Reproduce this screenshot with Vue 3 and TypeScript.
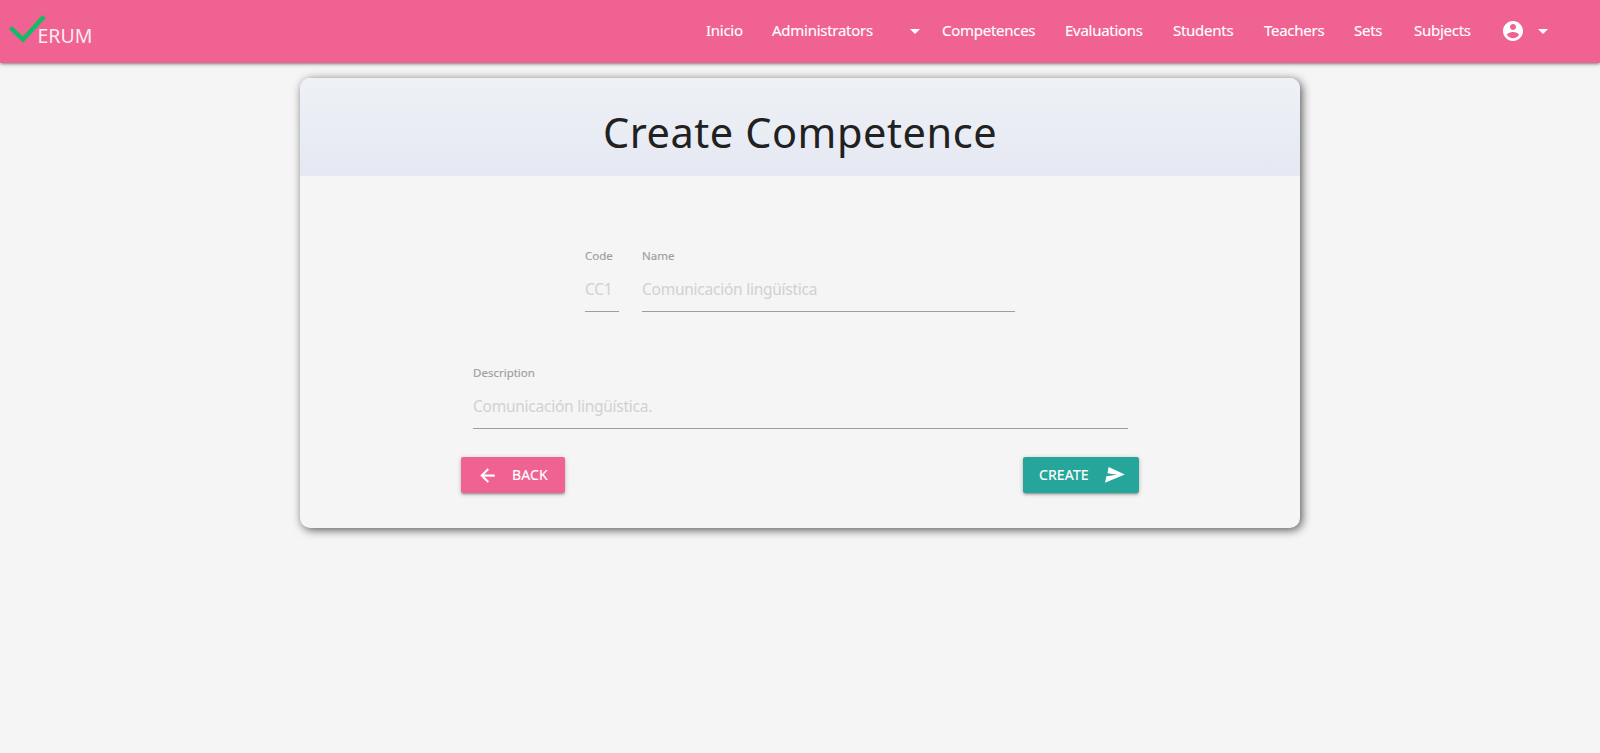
<script setup lang="ts">
interface NavItem {
  label: string
  width: number
  caret?: boolean
}

const navItems: NavItem[] = [
  { label: 'Inicio', width: 66 },
  { label: 'Administrators', width: 170, caret: true },
  { label: 'Competences', width: 123 },
  { label: 'Evaluations', width: 108 },
  { label: 'Students', width: 91 },
  { label: 'Teachers', width: 90 },
  { label: 'Sets', width: 60 },
  { label: 'Subjects', width: 88 },
]
</script>

<template>
  <div class="page">
    <nav class="navbar">
      <a class="brand">
        <svg class="check" width="40" height="34" viewBox="0 0 40 34"><path d="M2.500 14.500 15 26.500 36 3.500" /></svg>
        <span>ERUM</span>
      </a>
      <ul class="menu">
        <li v-for="item in navItems" :key="item.label" :style="{ width: item.width + 'px' }">
          <span>{{ item.label }}</span>
          <svg v-if="item.caret" class="caret" viewBox="0 0 24 24"><path d="M7 10l5 5 5-5z" /></svg>
        </li>
        <li class="account">
          <svg viewBox="0 0 24 24"><path d="M12 2C6.480 2 2 6.480 2 12s4.480 10 10 10 10-4.480 10-10S17.520 2 12 2zm0 3c1.660 0 3 1.340 3 3s-1.340 3-3 3-3-1.340-3-3 1.340-3 3-3zm0 14.200c-2.500 0-4.710-1.280-6-3.220.030-1.990 4-3.080 6-3.080 1.990 0 5.970 1.090 6 3.080-1.290 1.940-3.500 3.220-6 3.220z" /></svg>
          <svg viewBox="0 0 24 24"><path d="M7 10l5 5 5-5z" /></svg>
        </li>
      </ul>
    </nav>

    <main class="card">
      <header class="card-head"><h1>Create Competence</h1></header>
      <form class="form">
        <div class="row">
          <label class="field code"><span>Code</span><input type="text" placeholder="CC1" /></label>
          <label class="field name"><span>Name</span><input type="text" placeholder="Comunicación lingüística" /></label>
        </div>
        <label class="field description"><span>Description</span><input type="text" placeholder="Comunicación lingüística." /></label>
        <div class="actions">
          <button type="button" class="btn back">
            <svg viewBox="0 0 24 24"><path d="M20 11H7.830l5.590-5.590L12 4l-8 8 8 8 1.410-1.410L7.830 13H20v-2z" /></svg>
            <span>BACK</span>
          </button>
          <button type="button" class="btn create">
            <span>CREATE</span>
            <svg viewBox="0 0 20 16"><path d="M3.600 0 19.800 7.600 0 15.700 1.400 9.300 12 7.800 2.500 6.300z" /></svg>
          </button>
        </div>
      </form>
    </main>
  </div>
</template>

<style>
body {
  background: #f5f5f5;
}
</style>

<style scoped>
.page {
  height: 753px;
  overflow: hidden;
  background: #f5f5f5;
  font-family: "Noto Sans", "Open Sans", sans-serif;
}
.page *,
.page {
  box-sizing: border-box;
}
.navbar {
  display: flex;
  justify-content: space-between;
  height: 63px;
  background: #f06292;
  color: #fff;
  box-shadow: 0 2px 2px 0 rgba(0, 0, 0, 0.14), 0 3px 1px -2px rgba(0, 0, 0, 0.12), 0 1px 5px 0 rgba(0, 0, 0, 0.2);
}
.brand {
  display: flex;
  padding: 13px 0 0 8px;
}
.brand span {
  margin: 8px 0 0 -10.5px;
  font-size: 19.5px;
  line-height: 30px;
  letter-spacing: 0;
  opacity: 0.88;
}
.check path {
  fill: none;
  stroke: #12bb66;
  stroke-width: 4.4;
}
.menu {
  display: flex;
  margin: 0;
  padding: 0 38px 0 0;
  list-style: none;
  font-size: 15px;
  letter-spacing: -0.27px;
  line-height: 61px;
  -webkit-text-stroke: 0.15px currentColor;
}
.menu li {
  display: flex;
  align-items: flex-start;
  justify-content: space-between;
  padding-left: 15px;
}
.menu svg {
  width: 24px;
  height: 24px;
  margin-top: 19px;
  fill: #fff;
}
.menu .account {
  justify-content: flex-start;
  width: 76px;
  gap: 6px;
  margin-left: -1px;
}
.card {
  width: 1000px;
  height: 450px;
  margin: 15px auto 0;
  overflow: hidden;
  border-radius: 10px;
  background: #f5f5f5;
  box-shadow: 2px 2px 10px rgba(0, 0, 0, 0.65);
}
.card-head {
  height: 98px;
  background: linear-gradient(#eef2f6, #e5e8f2);
}
h1 {
  margin: 0;
  padding-top: 26px;
  font-size: 41.5px;
  font-weight: 400;
  line-height: 56px;
  letter-spacing: 0.55px;
  text-align: center;
  color: #212121;
}
.form {
  width: 678px;
  margin: 0 auto;
  padding-top: 71px;
}
.row {
  display: flex;
  gap: 23px;
  padding-left: 124px;
}
.field {
  display: block;
  height: 65px;
}
.field span {
  display: block;
  font-size: 11.5px;
  line-height: 18px;
  color: #9e9e9e;
  -webkit-text-stroke: 0.15px currentColor;
}
.field input {
  display: block;
  width: 100%;
  height: 47px;
  padding: 2px 0 0;
  border: 0;
  border-bottom: 1px solid #9e9e9e;
  background: transparent;
  font-family: inherit;
  font-size: 15.5px;
  letter-spacing: -0.25px;
  outline: 0;
}
.field input::placeholder {
  color: #d1d1d1;
  opacity: 1;
}
.code {
  width: 34px;
}
.name {
  width: 373px;
}
.description {
  width: 655px;
  margin: 52px 0 0 12px;
}
.actions {
  display: flex;
  justify-content: space-between;
  margin-top: 28px;
}
.btn {
  display: flex;
  align-items: center;
  height: 36px;
  padding: 0 16px;
  border: 0;
  border-radius: 2px;
  color: #fff;
  font-family: inherit;
  font-size: 14px;
  letter-spacing: 0.15px;
  -webkit-text-stroke: 0.15px currentColor;
  box-shadow: 0 2px 2px 0 rgba(0, 0, 0, 0.14), 0 3px 1px -2px rgba(0, 0, 0, 0.12), 0 1px 5px 0 rgba(0, 0, 0, 0.2);
}
.btn span {
  line-height: 19px;
  padding-bottom: 2px;
}
.btn svg {
  fill: #fff;
}
.back {
  width: 104px;
  background: #f06292;
}
.back svg {
  width: 21px;
  height: 21px;
  margin-right: 14px;
  stroke: #fff;
  stroke-width: 0.5;
}
.create {
  justify-content: space-between;
  width: 116px;
  padding-right: 14px;
  background: #26a69a;
}
.create svg {
  width: 20px;
  height: 16px;
}
</style>
